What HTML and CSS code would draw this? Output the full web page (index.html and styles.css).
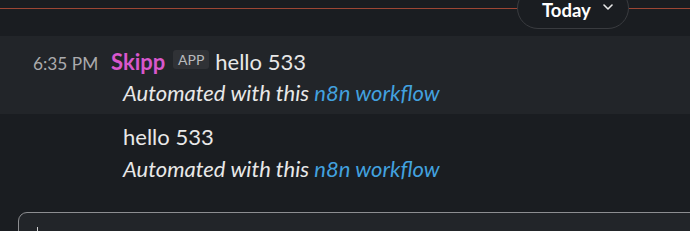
FILE: index.html
```html
<!DOCTYPE html>
<html lang="en">
<head>
<meta charset="utf-8">
<title>Slack messages</title>
<link rel="stylesheet" href="styles.css">
</head>
<body>
  <div class="divider">
    <span class="rule"></span>
    <div class="pill">
      <span class="pill-label">Today</span>
      <svg class="chev" width="10" height="6" viewBox="0 0 10 6"><polyline points="1,1 5,5 9,1" fill="none" stroke="#e8e8e8" stroke-width="1.6" stroke-linecap="round" stroke-linejoin="round"/></svg>
    </div>
    <span class="rule rule-end"></span>
  </div>

  <div class="msg msg-hover">
    <div class="line head">
      <span class="time">6:35 PM</span>
      <span class="name">Skipp</span>
      <span class="badge">APP</span>
      <span class="text">hello 533</span>
    </div>
    <div class="line indent"><em>Automated with this <a class="link" href="#">n8n workflow</a></em></div>
  </div>

  <div class="msg msg-second">
    <div class="line indent">hello 533</div>
    <div class="line indent"><em>Automated with this <a class="link" href="#">n8n workflow</a></em></div>
  </div>

  <div class="composer"><span class="caret"></span></div>
</body>
</html>
```

FILE: styles.css
```css
html, body {
  margin: 0;
  padding: 0;
  background: #1a1d21;
  overflow: hidden;
}
body {
  font-family: Lato, "Noto Sans", sans-serif;
  color: #e8e8e8;
  width: 690px;
  height: 231px;
}
.divider {
  display: flex;
  align-items: center;
  height: 42px;
  margin-top: -13px;
}
.rule {
  flex: 1;
  height: 1px;
  background: #9c4634;
}
.rule-end {
  flex: 0 0 61px;
}
.pill {
  box-sizing: border-box;
  width: 112px;
  height: 42px;
  border: 1px solid #393b3f;
  border-radius: 21px;
  display: flex;
  align-items: center;
  padding: 0 0 0 24px;
}
.pill-label {
  font-weight: 700;
  font-size: 18.5px;
  color: #ffffff;
  position: relative;
  top: 2px;
}
.chev {
  margin-left: 12px;
  position: relative;
  top: -1px;
}
.msg {
  font-size: 22px;
  line-height: 31.5px;
  color: #e8e8e8;
}
.msg-hover {
  background: #222529;
  margin-top: 7px;
  padding: 9.5px 0 5.5px 0;
}
.msg-second {
  padding: 7px 0 0 0;
}
.line {
  height: 31.5px;
  white-space: nowrap;
}
.head {
  display: flex;
  align-items: baseline;
  padding-left: 33px;
}
.time {
  font-size: 17.3px;
  color: #ababad;
  width: 78px;
}
.name {
  font-weight: 700;
  color: #d957cc;
}
.badge {
  align-self: flex-start;
  box-sizing: border-box;
  width: 36px;
  margin: 4.5px 6px 0 8px;
  height: 19px;
  line-height: 19px;
  text-align: center;
  font-size: 14px;
  color: #b9babd;
  background: #303236;
  border-radius: 3px;
}
.indent {
  padding-left: 123px;
}
em {
  font-style: italic;
}
.link {
  color: #42a1df;
  text-decoration: none;
}
.composer {
  margin: 28px -30px 0 18px;
  height: 60px;
  border: 1px solid #8d8e91;
  border-radius: 9px;
  background: #222529;
  position: relative;
}
.caret {
  position: absolute;
  left: 18px;
  top: 14px;
  width: 1px;
  height: 10px;
  background: #d0d0d0;
}
```
